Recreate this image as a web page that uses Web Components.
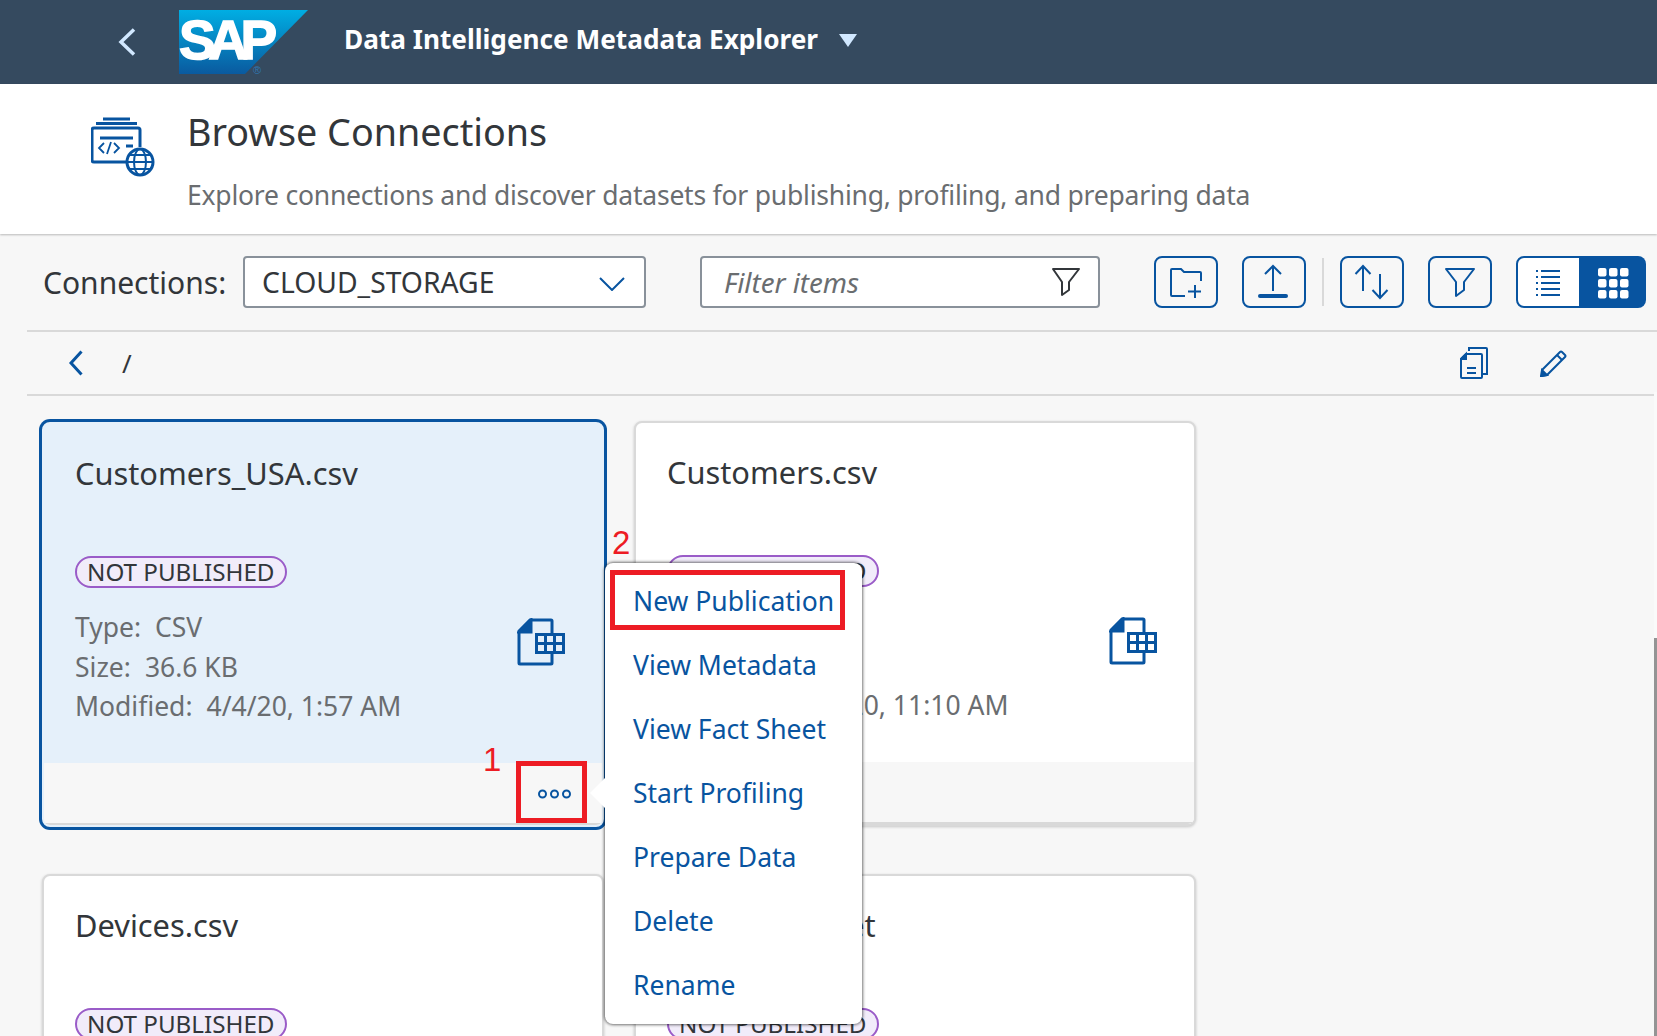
<!DOCTYPE html>
<html>
<head>
<meta charset="utf-8">
<title>Browse Connections</title>
<style>
    html, body { margin: 0; height: 100%; overflow: hidden; background: #f7f7f7; }
    body { font-family: "Noto Sans", "Open Sans", sans-serif; color: #32363a; }
</style>
</head>
<body>
<app-page>
    <shell-bar slot="top" title-text="Data Intelligence Metadata Explorer"></shell-bar>
    <page-head slot="top" heading="Browse Connections" text="Explore connections and discover datasets for publishing, profiling, and preparing data"></page-head>
    <browse-toolbar slot="top"></browse-toolbar>
    <path-bar slot="top"></path-bar>

    <file-card name="Customers_USA.csv" type="CSV" size="36.6 KB" modified="4/4/20, 1:57 AM" selected></file-card>
    <file-card name="Customers.csv" type="CSV" size="36.6 KB" modified="4/4/20, 11:10 AM"></file-card>
    <file-card name="Devices.csv"></file-card>
    <file-card name="Product_Sheet"></file-card>
</app-page>

<script>
/* icons, all blue line art */
const ICONS = {
    folder: `<svg width="64" height="52" viewBox="0 0 64 52" fill="none" stroke="#0854a0" stroke-width="2"><path d="M31 40H18q-1 0-1-1V14q0-1 1-1h9l3 3h16q1 0 1 1v8"/><path d="M41 29v13M34 35.500h13"/></svg>`,
    upload: `<svg width="64" height="52" viewBox="0 0 64 52" fill="none" stroke="#0854a0" stroke-width="2"><path d="M31 10v25M23 18l8-8 8 8"/><path d="M18 40h26" stroke-width="4" stroke-linecap="round"/></svg>`,
    sort: `<svg width="64" height="52" viewBox="0 0 64 52" fill="none" stroke="#0854a0" stroke-width="2"><path d="M23 10v25M15.500 18l7.500-8 7.500 8"/><path d="M40 18v24M32.500 34l7.500 8 7.500-8"/></svg>`,
    funnel: `<svg width="64" height="52" viewBox="0 0 64 52" fill="none" stroke="#0854a0" stroke-width="2"><path d="M18 13h28L36 26v8l-8 6V26z" stroke-linejoin="round"/></svg>`,
    list: `<svg width="64" height="52" viewBox="0 0 64 52" fill="none" stroke="#0854a0" stroke-width="2"><path d="M20 15h3M20 21h3M20 27h3M20 33h3M20 39h3" stroke-dasharray="2 1"/><path d="M25 15h19M25 21h19M25 27h19M25 33h19M25 39h19"/></svg>`,
    grid: `<svg width="64" height="52" viewBox="0 0 64 52" fill="#fff"><rect x="15" y="10" width="8.500" height="8.500" rx="2"/><rect x="26" y="10" width="8.500" height="8.500" rx="2"/><rect x="37" y="10" width="8.500" height="8.500" rx="2"/><rect x="15" y="21" width="8.500" height="8.500" rx="2"/><rect x="26" y="21" width="8.500" height="8.500" rx="2"/><rect x="37" y="21" width="8.500" height="8.500" rx="2"/><rect x="15" y="32" width="8.500" height="8.500" rx="2"/><rect x="26" y="32" width="8.500" height="8.500" rx="2"/><rect x="37" y="32" width="8.500" height="8.500" rx="2"/></svg>`,
    copy: `<svg width="28" height="32" viewBox="0 0 28 32" fill="none" stroke="#0854a0" stroke-width="2"><path d="M9 4V1h17q1 0 1 1v25h-4"/><path d="M6 7h15q1 0 1 1v22q0 1-1 1H2q-1 0-1-1V12z"/><path d="M1 12l5-5v5z" fill="#0854a0"/><path d="M7 21h9M7 26h9"/></svg>`,
    pencil: `<svg width="28" height="28" viewBox="0 0 28 28" fill="none" stroke="#0854a0" stroke-width="2"><path d="M2 21L20 3q1-1 2 0l3 3q1 1 0 2L7 26l-5 1z"/><path d="M17 6l5 5"/><path d="M1 27l1-6 5 5z" fill="#0854a0"/></svg>`,
    back: `<svg width="16" height="26" viewBox="0 0 16 26" fill="none" stroke="#0854a0" stroke-width="3"><path d="M13.500 1.500L3 13l10.500 11.500"/></svg>`,
    tableFile: `<svg width="48" height="48" viewBox="0 0 48 48" fill="none" stroke="#0854a0" stroke-width="3"><path d="M35 15V3q0-1-1-1H13L2 13v32q0 1 1 1h31q1 0 1-1V35"/><path d="M2 14L14 2v12z" fill="#0854a0"/><path d="M19.500 16.500h27v18h-27zM19.500 25.500h27M28.500 16.500v18M37.500 16.500v18"/></svg>`,
    connections: `<svg width="64" height="60" viewBox="0 0 64 60" fill="none" stroke="#0854a0" stroke-width="3"><path d="M12 2h27M5 6.500h41"/><path d="M38 45H3q-2 0-2-2V13q0-2 2-2h44q2 0 2 2v17"/><path d="M9 21h33M35 29h7"/><path d="M13 26l-5 5 5 5M23 26l5 5-5 5M20 25l-4 12" stroke-width="1.800"/><circle cx="49" cy="45" r="13" fill="#fff"/><ellipse cx="49" cy="45" rx="6" ry="13" stroke-width="2"/><path d="M36 45h26M38 38h22M38 52h22" stroke-width="2"/></svg>`
};

class AppPage extends HTMLElement {
    constructor() {
        super();
        this.attachShadow({mode: "open"});
        this.shadowRoot.innerHTML = `
            <style>
                :host { display: block; position: relative; height: 1036px; overflow: hidden; background: #f7f7f7; }
                .cards {
                    display: grid;
                    grid-template-columns: 562px 562px;
                    column-gap: 30px;
                    row-gap: 47px;
                    padding: 25px 0 0 42px;
                }
                .scroll { position: absolute; right: 0; top: 392px; bottom: 0; width: 3px; background: #fafafa; }
                .scroll i { position: absolute; left: 0; right: 0; top: 246px; bottom: 0; background: #949494; }
            </style>
            <slot name="top"></slot>
            <div class="cards"><slot></slot></div>
            <div class="scroll"><i></i></div>
            <action-menu></action-menu>
            <mark-box style="left:516px;top:761px;width:71px;height:62px" label="1" lx="-38" ly="-26"></mark-box>
            <mark-box style="left:610px;top:570px;width:235px;height:60px" label="2" lx="-3" ly="-52"></mark-box>
        `;
    }
}

class ShellBar extends HTMLElement {
    constructor() {
        super();
        this.attachShadow({mode: "open"});
        this.shadowRoot.innerHTML = `
            <style>
                :host { display: flex; align-items: center; height: 84px; background: #354a5f; padding-left: 118px; box-sizing: border-box; }
                .back { display: flex; width: 61px; }
                .logo { position: relative; width: 129px; height: 64px; margin-right: 36px; }
                .plate {
                    position: absolute; inset: 0;
                    background: linear-gradient(#00aee3, #0a5a9f);
                    clip-path: polygon(0 0, 100% 0, 66px 100%, 0 100%);
                    overflow: hidden;
                }
                .sap {
                    position: absolute; left: 0; top: 0;
                    font: bold 55px/60px "Liberation Sans", sans-serif;
                    letter-spacing: -7.500px;
                    color: #fff;
                    -webkit-text-stroke: 1.500px #fff;
                }
                .reg { position: absolute; left: 74px; top: 53px; font: 11px/14px "Liberation Sans", sans-serif; color: #2f78b4; }
                .title { font-size: 26.200px; font-weight: 700; color: #fff; white-space: nowrap; padding-bottom: 6px; }
                .caret { width: 0; height: 0; margin: -3px 0 0 21px; border: 9.500px solid transparent; border-top: 13px solid #d1e8ff; border-bottom: 0; }
            </style>
            <div class="back"><svg width="18" height="28" viewBox="0 0 18 28" fill="none" stroke="#d1e8ff" stroke-width="3.500"><path d="M16 1.500L3 14l13 12.500"/></svg></div>
            <div class="logo"><div class="plate"><span class="sap">SAP</span></div><span class="reg">®</span></div>
            <div class="title">${this.getAttribute("title-text")}</div>
            <div class="caret"></div>
        `;
    }
}

class PageHead extends HTMLElement {
    constructor() {
        super();
        this.attachShadow({mode: "open"});
        this.shadowRoot.innerHTML = `
            <style>
                :host {
                    display: flex; position: relative; height: 150px; box-sizing: border-box;
                    background: #fff; padding-left: 91px;
                    box-shadow: 0 1px 2px rgba(0, 0, 0, .25);
                }
                .icon { width: 96px; padding-top: 33px; }
                h1 { margin: 25px 0 0; font-size: 37.700px; line-height: 46px; font-weight: 400; color: #32363a; }
                p { margin: 21px 0 0; font-size: 26.500px; line-height: 38px; letter-spacing: -.22px; color: #6a6d70; white-space: nowrap; }
            </style>
            <div class="icon">${ICONS.connections}</div>
            <div>
                <h1>${this.getAttribute("heading")}</h1>
                <p>${this.getAttribute("text")}</p>
            </div>
        `;
    }
}

class ToolButton extends HTMLElement {
    constructor() {
        super();
        this.attachShadow({mode: "open"});
        this.shadowRoot.innerHTML = `
            <style>
                :host {
                    display: block; width: 64px; height: 52px; box-sizing: border-box;
                    border: 2px solid #0854a0; border-radius: 8px; background: transparent;
                }
                :host([on]) { background: #0854a0; }
                :host([left]) { border-radius: 8px 0 0 8px; background: #fff; width: 65px; }
                :host([right]) { border-radius: 0 8px 8px 0; border-left: 0; width: 65px; }
                ::slotted(svg) { display: block; margin: -2px 0 0 -2px; }
                :host([right]) ::slotted(svg) { margin: 0 0 0 2px; }
            </style>
            <slot></slot>
        `;
    }
}

class BrowseToolbar extends HTMLElement {
    constructor() {
        super();
        this.attachShadow({mode: "open"});
        this.shadowRoot.innerHTML = `
            <style>
                :host {
                    display: flex; align-items: center; height: 98px; box-sizing: border-box;
                    margin-left: 27px; padding: 0 0 0 16px;
                    border-bottom: 2px solid #d9d9d9;
                }
                label { font-size: 30px; width: 183px; margin-right: 17px; white-space: nowrap; }
                .field {
                    display: flex; align-items: center; justify-content: space-between;
                    height: 52px; box-sizing: border-box; background: #fff;
                    border: 2px solid #89919a; border-radius: 4px; font-size: 28.300px;
                }
                .select { width: 403px; padding: 0 19px 0 17px; }
                .select svg { margin-top: 3px; }
                .filter { width: 400px; margin-left: 54px; padding: 0 17px 0 22px; font-size: 27.700px; font-style: italic; color: #6a6d70; }
                .acts { display: flex; align-items: center; margin-left: 54px; }
                tool-button + tool-button { margin-left: 24px; }
                .sep { width: 2px; height: 48px; background: #d9d9d9; margin: 0 16px 0 16px; }
                .seg { display: flex; margin-left: 24px; }
                .seg tool-button { margin-left: 0; }
            </style>
            <label>Connections:</label>
            <div class="field select"><span>CLOUD_STORAGE</span>
                <svg width="26" height="14" viewBox="0 0 26 14" fill="none" stroke="#0854a0" stroke-width="2"><path d="M1 1l12 12L25 1"/></svg></div>
            <div class="field filter"><span>Filter items</span>
                <svg width="30" height="30" viewBox="0 0 30 30" fill="none" stroke="#32363a" stroke-width="2"><path d="M2 2h26L18 15v8l-7 5V15z" stroke-linejoin="round"/></svg></div>
            <div class="acts">
                <tool-button>${ICONS.folder}</tool-button>
                <tool-button>${ICONS.upload}</tool-button>
                <div class="sep"></div>
                <tool-button>${ICONS.sort}</tool-button>
                <tool-button>${ICONS.funnel}</tool-button>
                <div class="seg">
                    <tool-button left>${ICONS.list}</tool-button>
                    <tool-button right on>${ICONS.grid}</tool-button>
                </div>
            </div>
        `;
    }
}

class PathBar extends HTMLElement {
    constructor() {
        super();
        this.attachShadow({mode: "open"});
        this.shadowRoot.innerHTML = `
            <style>
                :host {
                    display: flex; align-items: center; height: 64px; box-sizing: border-box;
                    margin-left: 27px; padding-left: 41px;
                    border-bottom: 2px solid #d9d9d9;
                }
                .path { margin-left: 38px; font-size: 26px; flex: 1; }
                .copy { margin-right: 52px; display: flex; }
                .edit { margin-right: 89px; display: flex; }
            </style>
            ${ICONS.back}
            <span class="path">/</span>
            <span class="copy">${ICONS.copy}</span>
            <span class="edit">${ICONS.pencil}</span>
        `;
    }
}

class FileCard extends HTMLElement {
    constructor() {
        super();
        this.attachShadow({mode: "open"});
        const a = n => this.getAttribute(n);
        const row = (k, v) => v ? `<div><span class="k">${k}:</span>${v}</div>` : `<div>&nbsp;</div>`;
        this.shadowRoot.innerHTML = `
            <style>
                :host {
                    display: flex; flex-direction: column; height: 405px; box-sizing: border-box;
                    background: #fff; border: 2px solid #d9d9d9; border-radius: 8px;
                    box-shadow: 0 1px 3px rgba(0, 0, 0, .2); overflow: hidden;
                }
                :host([selected]) {
                    margin-top: 1px; background: #e5f0fa; border-color: #e5f0fa;
                    box-shadow: 0 0 0 3px #0854a0;
                }
                .body { flex: 1; padding: 29px 37px 0 31px; }
                .name { font-size: 30.800px; line-height: 40px; color: #32363a; white-space: nowrap; }
                .pill {
                    display: inline-block; margin-top: 63px; height: 32px; box-sizing: border-box;
                    padding: 0 10px; border: 2px solid #9a5cc8; border-radius: 16px;
                    background: #f1ecfa; font-size: 24.200px; line-height: 27px; color: #32363a;
                }
                .info { display: flex; justify-content: space-between; margin-top: 20px; }
                .meta { font-size: 26.500px; line-height: 39.500px; color: #6a6d70; white-space: nowrap; }
                .k { margin-right: 14px; }
                .icon { margin-top: 10px; display: flex; }
                .foot { height: 62px; background: #f7f7f7; border-bottom: 2px solid #d9d9d9; box-sizing: border-box; display: flex; align-items: center; justify-content: flex-end; padding: 2px 31px 0 0; }
            </style>
            <div class="body">
                <div class="name">${a("name")}</div>
                <span class="pill">NOT PUBLISHED</span>
                <div class="info">
                    <div class="meta">
                        ${row("Type", a("type"))}
                        ${row("Size", a("size"))}
                        ${row("Modified", a("modified"))}
                    </div>
                    <div class="icon">${ICONS.tableFile}</div>
                </div>
            </div>
            <div class="foot">
                ${this.hasAttribute("selected") ? `<svg width="33" height="10" viewBox="0 0 33 10" fill="none" stroke="#0854a0" stroke-width="2"><circle cx="4.500" cy="5" r="3.500"/><circle cx="16.500" cy="5" r="3.500"/><circle cx="28.500" cy="5" r="3.500"/></svg>` : ""}
            </div>
        `;
    }
}

class ActionMenu extends HTMLElement {
    constructor() {
        super();
        this.attachShadow({mode: "open"});
        const items = ["New Publication", "View Metadata", "View Fact Sheet", "Start Profiling", "Prepare Data", "Delete", "Rename"];
        this.shadowRoot.innerHTML = `
            <style>
                :host {
                    display: block; position: absolute; left: 605px; top: 563px; width: 257px;
                    box-sizing: border-box; padding: 6px 0 7px; background: #fff; border-radius: 8px;
                    box-shadow: 0 0 3px 1px rgba(0, 0, 0, .55);
                }
                .arrow {
                    position: absolute; left: -15px; top: 215px; width: 0; height: 0;
                    border: 15px solid transparent; border-left: 0; border-right: 15px solid #fff;
                }
                div.item { height: 64px; line-height: 64px; padding-left: 28px; font-size: 26.500px; color: #0854a0; white-space: nowrap; }
            </style>
            <div class="arrow"></div>
            ${items.map(t => `<div class="item">${t}</div>`).join("")}
        `;
    }
}

/* red callouts drawn on top of the screenshot */
class MarkBox extends HTMLElement {
    constructor() {
        super();
        this.attachShadow({mode: "open"});
        this.shadowRoot.innerHTML = `
            <style>
                :host { display: block; position: absolute; box-sizing: border-box; border: 5px solid #ed1c24; }
                span { position: absolute; font: 33px/40px "Liberation Sans", sans-serif; color: #ed1c24; }
            </style>
            <span style="left:${this.getAttribute("lx")}px;top:${this.getAttribute("ly")}px">${this.getAttribute("label")}</span>
        `;
    }
}

customElements.define("app-page", AppPage);
customElements.define("shell-bar", ShellBar);
customElements.define("page-head", PageHead);
customElements.define("tool-button", ToolButton);
customElements.define("browse-toolbar", BrowseToolbar);
customElements.define("path-bar", PathBar);
customElements.define("file-card", FileCard);
customElements.define("action-menu", ActionMenu);
customElements.define("mark-box", MarkBox);
</script>
</body>
</html>
